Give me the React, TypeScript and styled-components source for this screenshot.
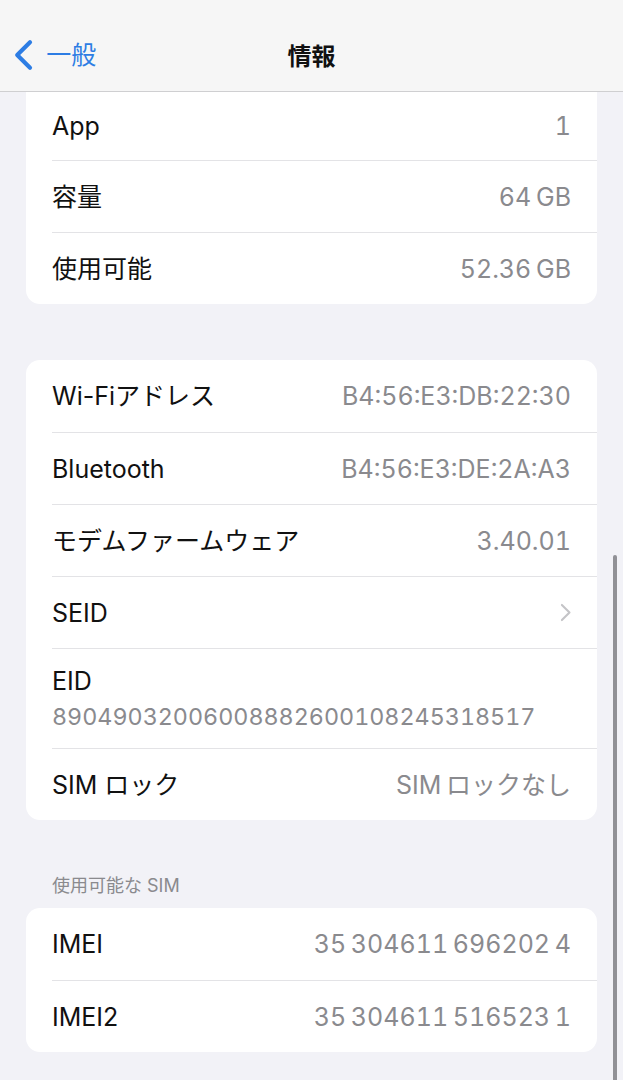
import styled, { createGlobalStyle } from "styled-components";

const GlobalStyle = createGlobalStyle`
    html, body {
        margin: 0;
        padding: 0;
        background: #f2f2f7;
    }
    * {
        box-sizing: border-box;
    }
`;

type Item = { label: string; value?: string; chevron?: boolean; stacked?: boolean };

const storage: Item[] = [
    { label: "App", value: "1" },
    { label: "容量", value: "64 GB" },
    { label: "使用可能", value: "52.36 GB" },
];

const network: Item[] = [
    { label: "Wi-Fiアドレス", value: "B4:56:E3:DB:22:30" },
    { label: "Bluetooth", value: "B4:56:E3:DE:2A:A3" },
    { label: "モデムファームウェア", value: "3.40.01" },
    { label: "SEID", chevron: true },
    { label: "EID", value: "89049032006008882600108245318517", stacked: true },
    { label: "SIM ロック", value: "SIM ロックなし" },
];

const sim: Item[] = [
    { label: "IMEI", value: "35 304611 696202 4" },
    { label: "IMEI2", value: "35 304611 516523 1" },
];

const Chevron = ({ color, size, width }: { color: string; size: number; width: number }) => (
    <svg width={size * 0.6} height={size} viewBox="0 0 12 20" fill="none">
        <path d="M10 2 L2 10 L10 18" stroke={color} strokeWidth={width} strokeLinecap="round" strokeLinejoin="round" />
    </svg>
);

const RowList = ({ items, flatTop }: { items: Item[]; flatTop?: boolean }) => (
    <Card $flatTop={flatTop}>
        {items.map((item, i) => (
            <Row key={item.label} $first={i === 0} $flatTop={flatTop} $stacked={item.stacked}>
                {item.stacked ? (
                    <>
                        <Label>{item.label}</Label>
                        <SubValue>{item.value}</SubValue>
                    </>
                ) : (
                    <>
                        <Label>{item.label}</Label>
                        {item.value && <Value>{item.value}</Value>}
                        {item.chevron && (
                            <ChevronRight>
                                <Chevron color="#c4c4c7" size={19} width={2.2} />
                            </ChevronRight>
                        )}
                    </>
                )}
            </Row>
        ))}
    </Card>
);

const App = () => {
    return (
        <Screen>
            <GlobalStyle />
            <NavBar>
                <BackButton>
                    <Chevron color="#2d7de4" size={32} width={2.6} />
                    <BackText>一般</BackText>
                </BackButton>
                <Title>情報</Title>
            </NavBar>
            <Content>
                <RowList items={storage} flatTop />
                <Gap $h={56} />
                <RowList items={network} />
                <SectionHeader>使用可能な SIM</SectionHeader>
                <RowList items={sim} />
            </Content>
            <ScrollIndicator />
        </Screen>
    );
};

export default App;

const Screen = styled.div`
    position: relative;
    width: 623px;
    height: 1080px;
    overflow: hidden;
    background: #f2f2f7;
    font-family: "Inter", "Noto Sans CJK JP", sans-serif;
`;

const NavBar = styled.div`
    height: 92px;
    padding-top: 18px;
    display: flex;
    align-items: center;
    justify-content: center;
    position: relative;
    background: #f6f6f6;
    border-bottom: 1px solid #cfcfd1;
`;

const BackButton = styled.div`
    position: absolute;
    left: 14px;
    top: 39px;
    display: flex;
    align-items: center;
    gap: 13px;
`;

const BackText = styled.span`
    font-size: 25px;
    color: #2d7de4;
    line-height: 1;
`;

const Title = styled.div`
    font-size: 24px;
    font-weight: 700;
    color: #111;
`;

const Content = styled.div`
    padding: 0 26px;
`;

const Card = styled.div<{ $flatTop?: boolean }>`
    background: #ffffff;
    border-radius: ${(p) => (p.$flatTop ? "0 0 14px 14px" : "14px")};
    overflow: hidden;
`;

const Row = styled.div<{ $first?: boolean; $flatTop?: boolean; $stacked?: boolean }>`
    height: ${(p) => (p.$stacked ? 100 : p.$first && p.$flatTop ? 68 : 72)}px;
    margin-left: 26px;
    padding-right: 26px;
    display: flex;
    flex-direction: ${(p) => (p.$stacked ? "column" : "row")};
    justify-content: ${(p) => (p.$stacked ? "center" : "space-between")};
    align-items: ${(p) => (p.$stacked ? "flex-start" : "center")};
    border-top: ${(p) => (p.$first ? "none" : "1px solid #e3e3e6")};
`;

const Label = styled.span`
    font-size: 25px;
    color: #111;
    line-height: 32px;
    white-space: nowrap;
`;

const Value = styled.span`
    font-size: 25px;
    color: #8a8a8e;
    font-variant-numeric: tabular-nums;
    line-height: 32px;
    white-space: nowrap;
    word-spacing: -2px;
`;

const SubValue = styled.span`
    font-size: 23.3px;
    color: #8a8a8e;
    font-variant-numeric: tabular-nums;
    line-height: 32px;
    margin-top: 4px;
`;

const ChevronRight = styled.span`
    display: flex;
    transform: scaleX(-1);
`;

const Gap = styled.div<{ $h: number }>`
    height: ${(p) => p.$h}px;
`;

const SectionHeader = styled.div`
    padding: 55px 26px 11px;
    font-size: 18px;
    color: #8a8a8e;
    line-height: 22px;
`;

const ScrollIndicator = styled.div`
    position: absolute;
    right: 6px;
    top: 555px;
    width: 4px;
    height: 540px;
    border-radius: 2px;
    background: #919196;
`;
